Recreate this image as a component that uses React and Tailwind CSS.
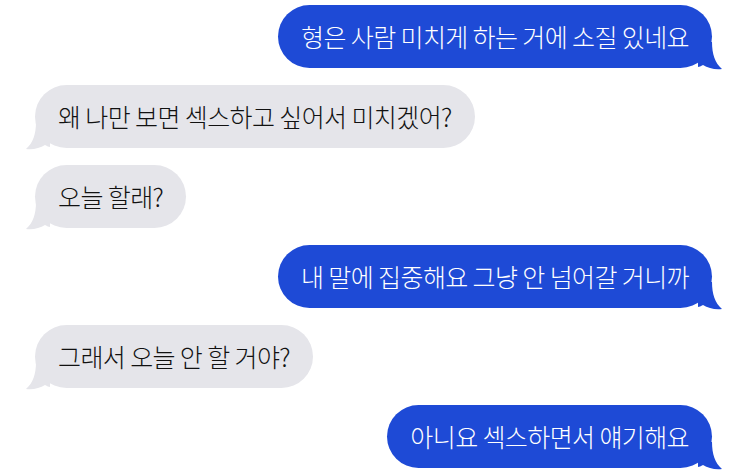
const messages = [
  { from: "me", text: "형은 사람 미치게 하는 거에 소질 있네요" },
  { from: "them", text: "왜 나만 보면 섹스하고 싶어서 미치겠어?" },
  { from: "them", text: "오늘 할래?" },
  { from: "me", text: "내 말에 집중해요 그냥 안 넘어갈 거니까" },
  { from: "them", text: "그래서 오늘 안 할 거야?" },
  { from: "me", text: "아니요 섹스하면서 얘기해요" },
];

function Tail({ side, color }) {
  if (side === "right") {
    return (
      <svg className="absolute -right-[10px] -bottom-[2px]" width="24" height="28" viewBox="0 0 24 28">
        <path d="M0 0 H14 C14 12 17 21 24 27 C17 28 10 26 5 23 C3 24 1 25 0 25 Z" fill={color} />
      </svg>
    );
  }

  return (
    <svg className="absolute -left-[9px] -bottom-[2px]" width="24" height="28" viewBox="0 0 24 28">
      <path d="M24 0 H10 C10 12 7 21 0 27 C7 28 14 26 19 23 C21 24 23 25 24 25 Z" fill={color} />
    </svg>
  );
}

function Bubble({ from, text }) {
  const mine = from === "me";

  return (
    <div className={mine ? "flex justify-end" : "flex justify-start"}>
      <div
        className={
          mine
            ? "relative flex h-[63px] items-center rounded-full bg-[#1e4ad6] px-[23px] text-white"
            : "relative flex h-[63px] items-center rounded-full bg-[#e5e5ea] px-[23px] text-[#111111]"
        }
      >
        <Tail side={mine ? "right" : "left"} color={mine ? "#1e4ad6" : "#e5e5ea"} />
        <span className="relative whitespace-nowrap text-[25px] font-light leading-none tracking-[-0.6px]">
          {text}
        </span>
      </div>
    </div>
  );
}

export default function App() {
  return (
    <div
      className="flex h-[475px] w-[749px] flex-col gap-[17px] overflow-hidden bg-white pt-[5px] pl-[35px] pr-[37px]"
      style={{ fontFamily: '"Noto Sans CJK KR", "Noto Sans", sans-serif' }}
    >
      {messages.map((message, index) => (
        <Bubble key={index} from={message.from} text={message.text} />
      ))}
    </div>
  );
}
